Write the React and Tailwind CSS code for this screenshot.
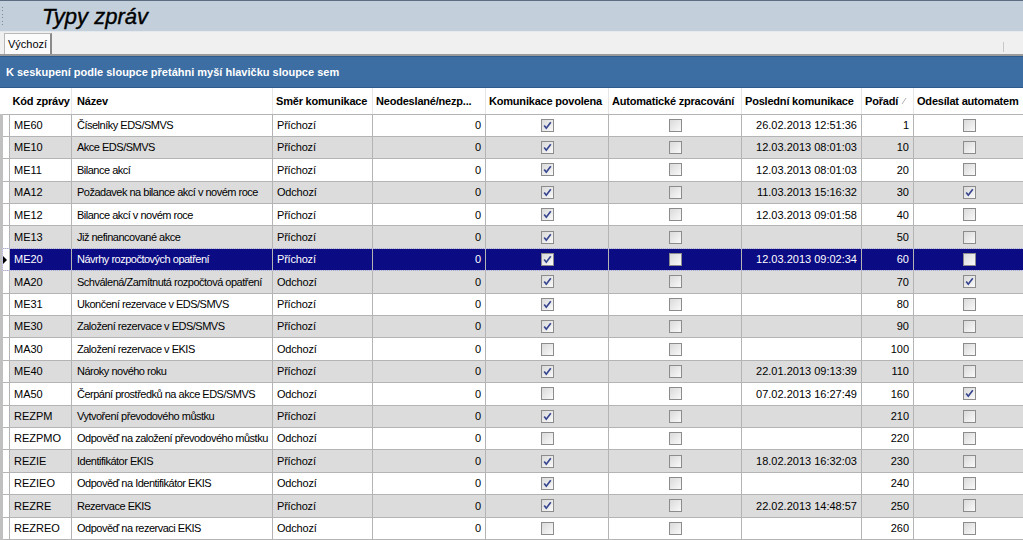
import React from 'react';

const rows = [
  ['ME60', 'Číselníky EDS/SMVS', 'Příchozí', 1, 0, '26.02.2013 12:51:36', '1', 0],
  ['ME10', 'Akce EDS/SMVS', 'Příchozí', 1, 0, '12.03.2013 08:01:03', '10', 0],
  ['ME11', 'Bilance akcí', 'Příchozí', 1, 0, '12.03.2013 08:01:03', '20', 0],
  ['MA12', 'Požadavek na bilance akcí v novém roce', 'Odchozí', 1, 0, '11.03.2013 15:16:32', '30', 1],
  ['ME12', 'Bilance akcí v novém roce', 'Příchozí', 1, 0, '12.03.2013 09:01:58', '40', 0],
  ['ME13', 'Již nefinancované akce', 'Příchozí', 1, 0, '', '50', 0],
  ['ME20', 'Návrhy rozpočtových opatření', 'Příchozí', 1, 0, '12.03.2013 09:02:34', '60', 0],
  ['MA20', 'Schválená/Zamítnutá rozpočtová opatření', 'Odchozí', 1, 0, '', '70', 1],
  ['ME31', 'Ukončení rezervace v EDS/SMVS', 'Příchozí', 1, 0, '', '80', 0],
  ['ME30', 'Založení rezervace v EDS/SMVS', 'Příchozí', 1, 0, '', '90', 0],
  ['MA30', 'Založení rezervace v EKIS', 'Odchozí', 0, 0, '', '100', 0],
  ['ME40', 'Nároky nového roku', 'Příchozí', 1, 0, '22.01.2013 09:13:39', '110', 0],
  ['MA50', 'Čerpání prostředků na akce EDS/SMVS', 'Odchozí', 0, 0, '07.02.2013 16:27:49', '160', 1],
  ['REZPM', 'Vytvoření převodového můstku', 'Příchozí', 1, 0, '', '210', 0],
  ['REZPMO', 'Odpověď na založení převodového můstku', 'Odchozí', 0, 0, '', '220', 0],
  ['REZIE', 'Identifikátor EKIS', 'Příchozí', 1, 0, '18.02.2013 16:32:03', '230', 0],
  ['REZIEO', 'Odpověď na Identifikátor EKIS', 'Odchozí', 1, 0, '', '240', 0],
  ['REZRE', 'Rezervace EKIS', 'Příchozí', 1, 0, '22.02.2013 14:48:57', '250', 0],
  ['REZREO', 'Odpověď na rezervaci EKIS', 'Odchozí', 0, 0, '', '260', 0],
];

const SELECTED = 6;

// old winforms style grid checkbox
const Check = ({ on }) => (
  <svg width="13" height="13" viewBox="0 0 13 13" className="mx-auto block">
    <defs>
      <linearGradient id="cbg" x1="0" y1="0" x2="1" y2="1">
        <stop offset="0" stopColor="#d8d8d8" />
        <stop offset="1" stopColor="#fbfbfb" />
      </linearGradient>
    </defs>
    <rect x="0.5" y="0.5" width="12" height="12" fill="url(#cbg)" stroke="#8c8c8c" />
    {on ? <path d="M3.2 6.4 L5.3 9.2 L9.8 3.2" fill="none" stroke="#384690" strokeWidth="1.7" /> : null}
  </svg>
);

const cell = 'border border-[#b4b4b4] px-[4px] whitespace-nowrap overflow-hidden';
const head = 'border-b border-r border-[#e6e6e6] border-b-[#b4b4b4] px-[3px] text-left whitespace-nowrap overflow-hidden tracking-[-0.2px]';

const App = () => {
  return (
    <div className="w-[1023px] h-[540px] overflow-hidden bg-white text-[11px] text-black" style={{ fontFamily: '"Liberation Sans", Arial, sans-serif' }}>
      <div className="flex h-[32px] items-center border-t border-[#5d6e80] border-b border-b-[#e4e9ee] bg-[#c3d0dc]">
        <div className="ml-[2px] flex h-[22px] w-[2px] flex-col justify-between py-[2px]">
          <span className="h-px w-px bg-[#7a8897]" />
          <span className="h-px w-px bg-[#7a8897]" />
          <span className="h-px w-px bg-[#7a8897]" />
          <span className="h-px w-px bg-[#7a8897]" />
          <span className="h-px w-px bg-[#7a8897]" />
          <span className="h-px w-px bg-[#7a8897]" />
        </div>
        <h1 className="ml-[38px] mt-[2px] text-[22px] italic leading-none [-webkit-text-stroke:0.4px_black]">Typy zpráv</h1>
      </div>

      <div className="flex h-[24px] items-end border-b-2 border-[#9a9a9a] bg-[#f0f0f0]">
        <div className="ml-[4px] flex h-[21px] items-center border border-b-0 border-[#b8b8b8] border-r-2 border-r-[#8a8a8a] bg-[#fbfbfb] px-[3px]">
          Výchozí
        </div>
        <div className="ml-auto mr-[19px] mb-[2px] h-[10px] w-px bg-[#c8c8c8]" />
      </div>

      <div className="flex h-[32px] items-center border-t border-[#2f5b8c] border-b border-b-[#2f5b8c] bg-[#3c6da3] pl-[6px] font-bold text-white">
        K seskupení podle sloupce přetáhni myší hlavičku sloupce sem
      </div>

      <table className="w-[1023px] table-fixed border-collapse">
        <colgroup>
          <col className="w-[8px]" />
          <col className="w-[62px]" />
          <col className="w-[201px]" />
          <col className="w-[100px]" />
          <col className="w-[113px]" />
          <col className="w-[123px]" />
          <col className="w-[133px]" />
          <col className="w-[120px]" />
          <col className="w-[52px]" />
          <col className="w-[111px]" />
        </colgroup>
        <thead>
          <tr className="h-[26px] bg-white font-bold">
            <th className="border-b border-[#b4b4b4]" />
            <th className={head}>Kód zprávy</th>
            <th className={`${head} pl-[5px]`}>Název</th>
            <th className={head}>Směr komunikace</th>
            <th className={head}>Neodeslané/nezp...</th>
            <th className={head}>Komunikace povolena</th>
            <th className={head}>Automatické zpracování</th>
            <th className={head}>Poslední komunikace</th>
            <th className={head}>
              <span className="flex items-center">
                Pořadí
                <svg width="6" height="8" viewBox="0 0 6 8" className="ml-[3px]">
                  <path d="M1 7 L5 1" stroke="#b0b0b0" strokeWidth="1" />
                </svg>
              </span>
            </th>
            <th className="overflow-hidden whitespace-nowrap border-b border-[#b4b4b4] px-[3px] text-left tracking-[-0.2px]">Odesílat automatem</th>
          </tr>
        </thead>
        <tbody>
          {rows.map((r, i) => {
            const sel = i === SELECTED;
            const bg = sel ? 'bg-[#0b0b84] text-white' : i % 2 === 1 ? 'bg-[#dcdcdc]' : 'bg-white';
            return (
              <tr key={r[0]} className={`h-[22.4px] ${bg} ${sel ? 'outline-1 outline-dotted outline-offset-[-1px] outline-[#c8c8ff]' : ''}`}>
                <td className="border-y border-l-[3px] border-[#b4b4b4] border-l-[#c0c0c0] bg-white p-0">
                  {sel ? (
                    <svg width="5" height="8" viewBox="0 0 5 8" className="block">
                      <path d="M0 0 L4 4 L0 8 Z" fill="#000" />
                    </svg>
                  ) : null}
                </td>
                <td className={cell}>{r[0]}</td>
                <td className={`${cell} pl-[5px] tracking-[-0.5px]`}>{r[1]}</td>
                <td className={`${cell} tracking-[-0.2px]`}>{r[2]}</td>
                <td className={`${cell} text-right`}>0</td>
                <td className={cell}><Check on={r[3]} /></td>
                <td className={cell}><Check on={r[4]} /></td>
                <td className={`${cell} text-right`}>{r[5]}</td>
                <td className={`${cell} text-right`}>{r[6]}</td>
                <td className={cell}><Check on={r[7]} /></td>
              </tr>
            );
          })}
        </tbody>
      </table>
    </div>
  );
};

export default App;
